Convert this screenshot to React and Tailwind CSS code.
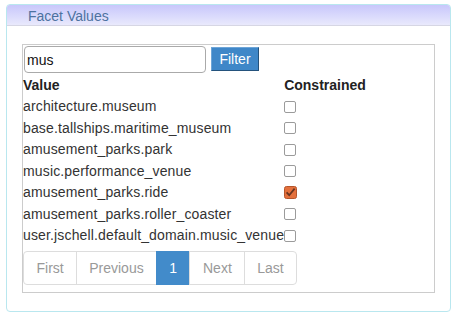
import React from "react";

const rows = [
  ["architecture.museum", false],
  ["base.tallships.maritime_museum", false],
  ["amusement_parks.park", false],
  ["music.performance_venue", false],
  ["amusement_parks.ride", true],
  ["amusement_parks.roller_coaster", false],
  ["user.jschell.default_domain.music_venue", false],
];

function Box({ checked }) {
  if (checked) {
    return (
      <svg width="13" height="13" viewBox="0 0 13 13" className="block">
        <rect x="0.5" y="0.5" width="12" height="12" rx="2" fill="#e4703c" stroke="#b5552b" />
        <path d="M2.6 6.4 L5.2 9.2 L10.6 2.6" fill="none" stroke="#6a3520" strokeWidth="1.8" />
      </svg>
    );
  }
  return <span className="block w-[12px] h-[12px] border border-[#9b9b9b] rounded-[2px] bg-white" />;
}

export default function App() {
  return (
    <div className="w-[459px] h-[317px] bg-white font-['Liberation_Sans',Arial,sans-serif] text-[14px] text-[#333] pt-[4px] pl-[6px]">
      <div className="w-[445px] h-[308px] border border-[#b9e7ef] rounded-[4px] overflow-hidden">
        <div className="h-[21px] bg-gradient-to-b from-[#c8c7fb] to-[#e9e9fc] border-b border-[#d6d6e4] pl-[21px] text-[#4d72a0] leading-[22px]">
          Facet Values
        </div>
        <div className="mt-[18px] ml-[15px] w-[413px] h-[249px] border border-[#cccccc]">
          <div className="flex items-start">
            <input
              readOnly
              value="mus"
              className="ml-px mt-px w-[182px] h-[27px] border border-[#aaaaaa] rounded-[4px] px-[2px] text-[14px] text-[#111] outline-none font-['Liberation_Sans',Arial,sans-serif]"
            />
            <button className="ml-[5px] mt-[2px] w-[48px] h-[24px] bg-[#3f87c8] border border-t-[#6da5d8] border-l-[#6da5d8] border-r-[#24527c] border-b-[#24527c] text-white text-[14px] leading-[20px] flex items-center justify-center">
              Filter
            </button>
          </div>
          <table className="mt-[2px] border-collapse">
            <thead>
              <tr className="h-[20px]">
                <th className="p-0 w-[261px] text-left font-bold text-[#222]">Value</th>
                <th className="p-0 text-left font-bold text-[#222]">Constrained</th>
              </tr>
            </thead>
            <tbody>
              {rows.map(([name, checked]) => (
                <tr key={name} className="h-[21.5px]">
                  <td className="p-0 w-[261px] whitespace-nowrap tracking-[0.15px]">{name}</td>
                  <td className="p-0 align-middle">
                    <Box checked={checked} />
                  </td>
                </tr>
              ))}
            </tbody>
          </table>
          <div className="mt-[4px] flex text-[14px] leading-[20px]">
            <span className="h-[34px] px-[12.5px] py-[6px] border border-[#dddddd] rounded-l-[4px] text-[#999]">First</span>
            <span className="-ml-px h-[34px] px-[12px] py-[6px] border border-[#dddddd] text-[#999]">Previous</span>
            <span className="-ml-px h-[34px] px-[12.5px] py-[6px] border border-[#428bca] bg-[#428bca] text-white">1</span>
            <span className="-ml-px h-[34px] px-[12.5px] py-[6px] border border-[#dddddd] text-[#999]">Next</span>
            <span className="-ml-px h-[34px] px-[12px] py-[6px] border border-[#dddddd] rounded-r-[4px] text-[#999]">Last</span>
          </div>
        </div>
      </div>
    </div>
  );
}
